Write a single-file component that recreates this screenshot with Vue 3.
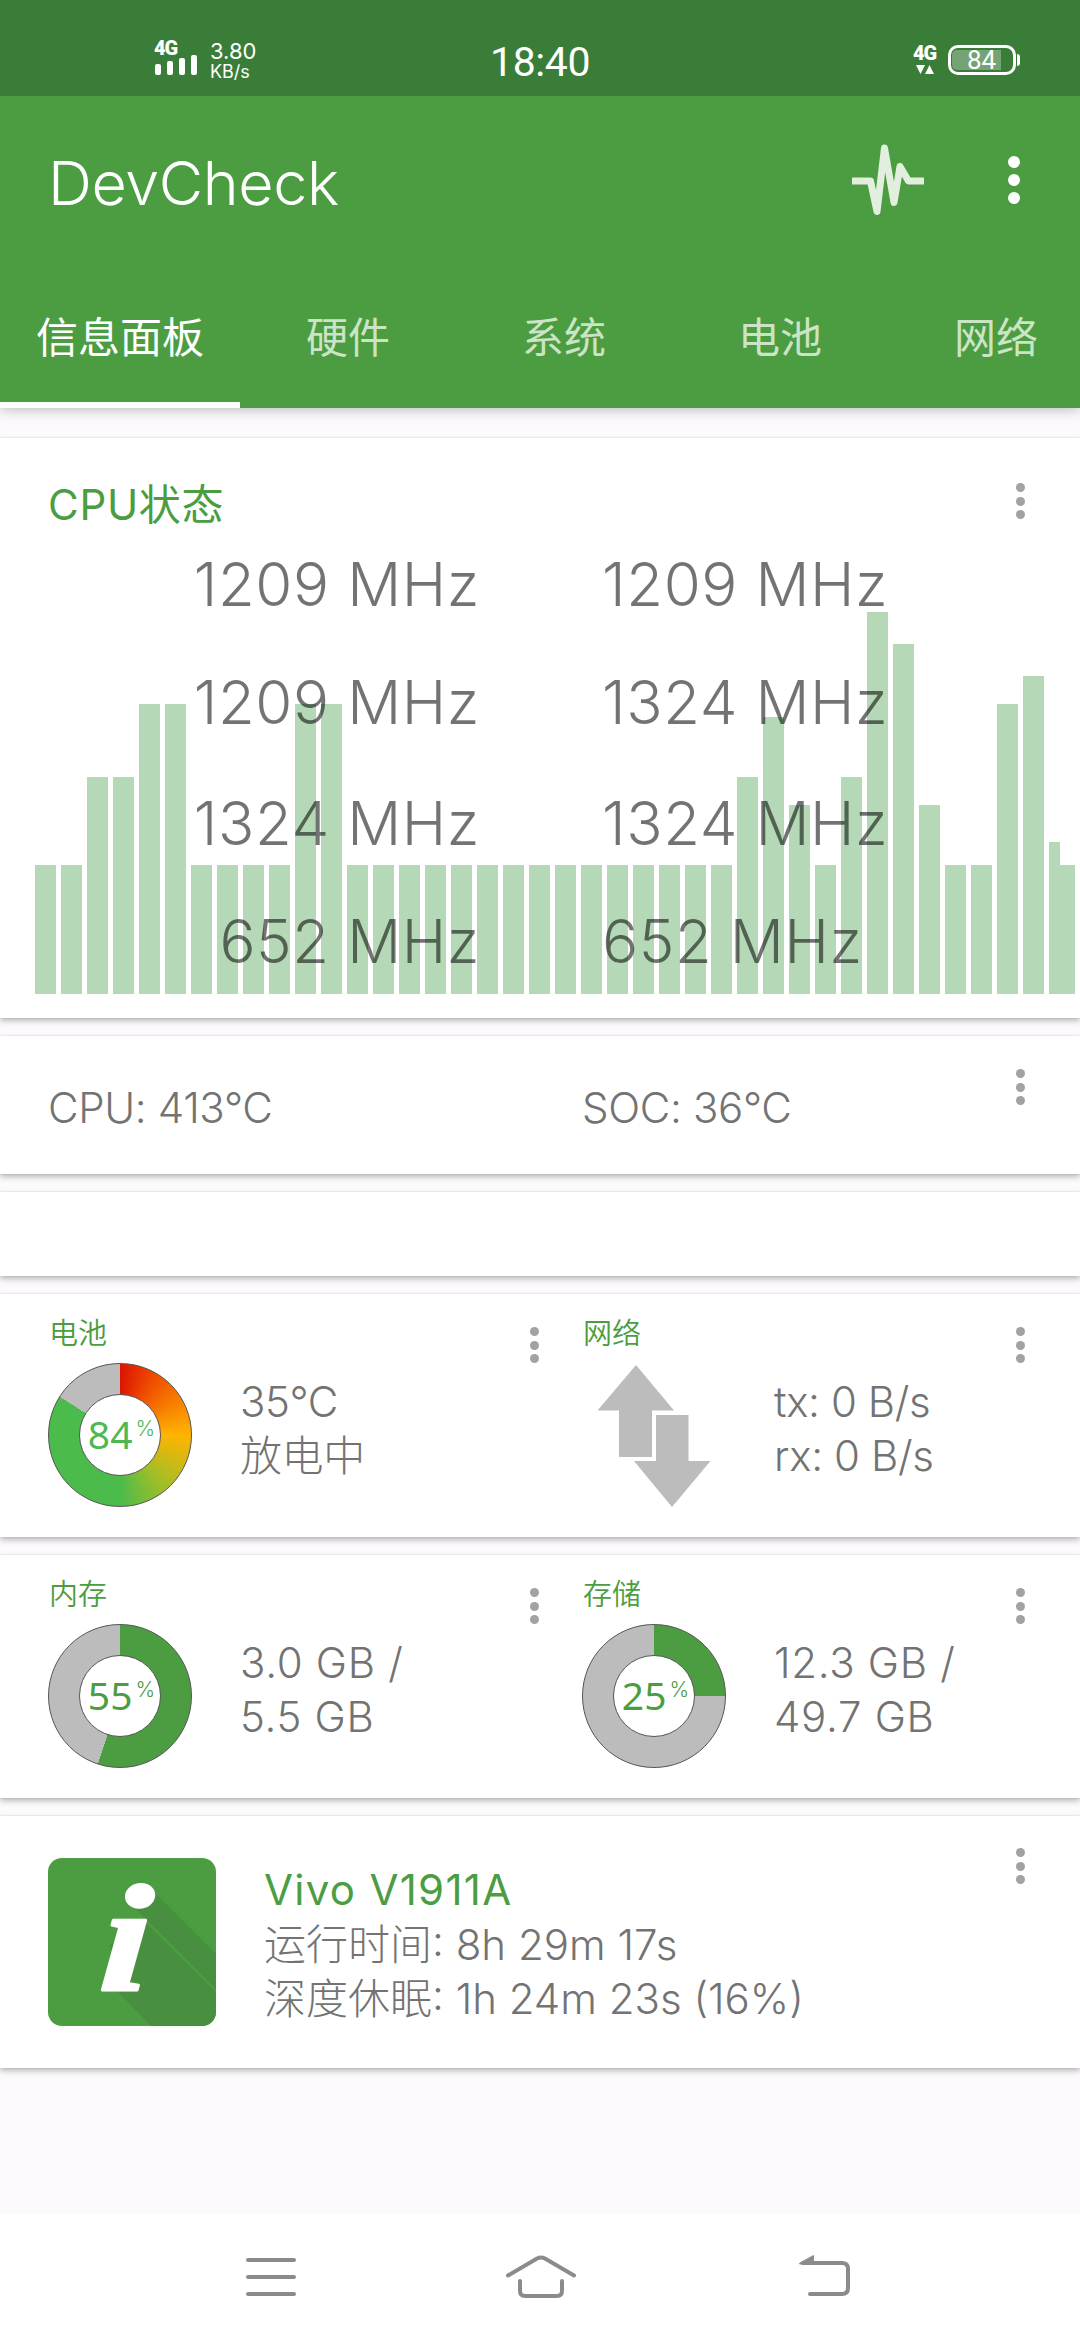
<script setup>
const tabs = ["信息面板", "硬件", "系统", "电池", "网络"];

const cores = [
  ["1209 MHz", "1209 MHz"],
  ["1209 MHz", "1324 MHz"],
  ["1324 MHz", "1324 MHz"],
  ["652 MHz", "652 MHz"],
];

const idle = 129;
const history = [
  idle, idle, 217, 217, 290, 290, idle, idle, idle, idle, 290, 290,
  ...Array(15).fill(idle),
  217, 277, 189, idle, 217, 382, 350, 189, idle, idle, 290, 318,
];

const signal = [11, 14, 17, 20];

function ring(percent, color) {
  return {
    background: `conic-gradient(${color} 0 ${percent}%, #bcbcbc ${percent}% 100%)`,
  };
}

const batteryRing = {
  background:
    "conic-gradient(#dc1402 0%, #f05000 9%, #ffb400 25%, #a0be28 39%, #4bbb4b 50%, #4bbb4b 84%, #bcbcbc 84%)",
};
</script>

<template>
  <div class="screen">
    <div class="status">
      <div class="net">
        <b>4G</b>
        <div class="signal">
          <i v-for="h in signal" :key="h" :style="{ height: h + 'px' }"></i>
        </div>
      </div>
      <div class="speed">
        <span>3.80</span>
        <small>KB/s</small>
      </div>
      <div class="clock">18:40</div>
      <div class="data">
        <b>4G</b>
        <svg width="18" height="9" viewBox="0 0 18 9" fill="#fff">
          <path d="M0 0h9L4.500 9zM9 9h9L13.500 0z" />
        </svg>
      </div>
      <div class="battery">
        <div class="level"></div>
        <span>84</span>
      </div>
      <div class="tip"></div>
    </div>

    <header>
      <div class="bar">
        <h1>DevCheck</h1>
        <svg class="pulse" width="72" height="72" viewBox="0 0 72 72">
          <path
            d="M0 37H18.500L25 67.500 32.500 4 42 58.500 48 22.500 56.500 37H72"
            fill="none"
            stroke="#e2efdf"
            stroke-width="7"
            stroke-linejoin="round"
          />
        </svg>
        <div class="dots big"><i></i><i></i><i></i></div>
      </div>
      <nav class="tabs">
        <a v-for="(tab, i) in tabs" :key="tab" :class="{ active: i === 0 }">{{ tab }}</a>
      </nav>
    </header>

    <main>
      <section class="card cpu">
        <div class="chart">
          <i v-for="(h, i) in history" :key="i" :style="{ height: h + 'px' }"></i>
          <i class="part"></i>
          <i class="rest"></i>
        </div>
        <div class="cpu-body">
          <div class="cpu-head">
            <h2>CPU状态</h2>
            <div class="dots"><i></i><i></i><i></i></div>
          </div>
          <div class="cores">
            <template v-for="(row, i) in cores" :key="i">
              <span class="left">{{ row[0] }}</span>
              <span>{{ row[1] }}</span>
            </template>
          </div>
        </div>
      </section>

      <section class="card temps">
        <span>CPU: 413°C</span>
        <span>SOC: 36°C</span>
        <div class="dots"><i></i><i></i><i></i></div>
      </section>

      <section class="card blank"></section>

      <section class="card pair">
        <div class="cell">
          <div class="info">
            <h3>电池</h3>
            <div class="row">
              <div class="ring" :style="batteryRing">
                <div class="hole light">84<sup>%</sup></div>
              </div>
              <p>35°C<br />放电中</p>
            </div>
          </div>
          <div class="dots"><i></i><i></i><i></i></div>
        </div>
        <div class="cell">
          <div class="info">
            <h3>网络</h3>
            <div class="row">
              <svg width="144" height="144" viewBox="0 0 144 144" fill="#bcbcbc">
                <path d="M54 2L92 47.500H70V94H37V47.500H15.500z" />
                <path d="M74 52H106.500V98H128.500L90 144 52 98H74z" />
              </svg>
              <p>tx: 0 B/s<br />rx: 0 B/s</p>
            </div>
          </div>
          <div class="dots"><i></i><i></i><i></i></div>
        </div>
      </section>

      <section class="card pair usage">
        <div class="cell">
          <div class="info">
            <h3>内存</h3>
            <div class="row">
              <div class="ring" :style="ring(55, '#4c9d42')">
                <div class="hole">55<sup>%</sup></div>
              </div>
              <p>3.0 GB /<br />5.5 GB</p>
            </div>
          </div>
          <div class="dots"><i></i><i></i><i></i></div>
        </div>
        <div class="cell">
          <div class="info">
            <h3>存储</h3>
            <div class="row">
              <div class="ring" :style="ring(25, '#4c9d42')">
                <div class="hole">25<sup>%</sup></div>
              </div>
              <p>12.3 GB /<br />49.7 GB</p>
            </div>
          </div>
          <div class="dots"><i></i><i></i><i></i></div>
        </div>
      </section>

      <section class="card device">
        <svg class="logo" width="168" height="168" viewBox="0 0 168 168">
          <clipPath id="tile"><rect width="168" height="168" rx="14" /></clipPath>
          <g clip-path="url(#tile)">
            <rect width="168" height="168" fill="#4c9d42" />
            <path d="M101 29L168 96V131L84 47z" fill="#488f3f" />
            <path d="M97 64L168 134V168H103L70 134 72 100 60 88z" fill="#488f3f" />
          </g>
          <text class="logo-i" transform="translate(50 132) skewX(-4) scale(1.120 .950)">i</text>
        </svg>
        <div class="about">
          <h2>Vivo V1911A</h2>
          <p>运行时间: 8h 29m 17s<br />深度休眠: 1h 24m 23s (16%)</p>
        </div>
        <div class="dots"><i></i><i></i><i></i></div>
      </section>
    </main>

    <footer>
      <svg width="52" height="44" viewBox="0 0 52 44">
        <path d="M3 5H49M3 22H49M3 39H49" />
      </svg>
      <svg class="home" width="72" height="44" viewBox="0 0 72 44">
        <path d="M3 20.500L32 3.500Q36 1.500 40 3.500L69 20.500M15 26V36Q15 41 20 41H52Q57 41 57 36V26" />
      </svg>
      <svg width="52" height="44" viewBox="0 0 52 44">
        <path d="M4 8H43Q49 8 49 14V33Q49 39 43 39H11" />
        <path class="head" d="M1 8L14.500 .500V9H1z" />
      </svg>
    </footer>
  </div>
</template>

<style>
body {
  margin: 0;
  background: #fcfafc;
}
</style>

<style scoped>
.screen {
  width: 1080px;
  height: 2340px;
  display: flex;
  flex-direction: column;
  overflow: hidden;
  background: #fcfafc;
  color: #737373;
  font-family: Inter, "Noto Sans CJK SC", sans-serif;
  font-weight: 300;
}

h1,
h2,
h3,
p {
  margin: 0;
}

i {
  display: block;
}

/* status bar */
.status {
  position: relative;
  z-index: 1;
  height: 96px;
  display: flex;
  align-items: flex-start;
  box-sizing: border-box;
  padding-left: 154px;
  background: #3a7d38;
  color: #fff;
}

.status b {
  display: block;
  font-family: Roboto, sans-serif;
  font-weight: 900;
  font-size: 20px;
  line-height: 20px;
  letter-spacing: -1px;
}

.net {
  width: 56px;
  padding-top: 38px;
}

.signal {
  display: flex;
  align-items: flex-end;
  gap: 6px;
  height: 20px;
  margin-top: -3px;
  padding-left: 1px;
}

.signal i {
  width: 6px;
  border-radius: 2px;
  background: #fff;
}

.speed {
  display: flex;
  flex-direction: column;
  width: 280px;
  padding-top: 40px;
  font-weight: 400;
  font-size: 22px;
  line-height: 22px;
}

.speed small {
  font-size: 18px;
  line-height: 20px;
}

.clock {
  width: 423px;
  padding-top: 38px;
  font-family: Roboto, sans-serif;
  font-weight: 400;
  font-size: 41px;
  line-height: 48px;
  letter-spacing: -0.400px;
}

.data {
  width: 35px;
  padding-top: 43px;
}

.data svg {
  display: block;
  margin: 2px 0 0 3px;
}

.battery {
  display: grid;
  box-sizing: border-box;
  width: 68px;
  height: 30px;
  margin-top: 45px;
  border: 3px solid #fff;
  border-radius: 10px;
  line-height: 25px;
}

.battery > * {
  grid-area: 1 / 1;
}

.battery .level {
  width: 49px;
  height: 20px;
  margin: 2px 0 0 1px;
  border-radius: 5px 0 0 5px;
  background: rgba(255, 255, 255, 0.3);
}

.battery span {
  padding-left: 16px;
  font-family: Roboto, sans-serif;
  font-weight: 400;
  font-size: 26px;
}

.tip {
  width: 3px;
  height: 12px;
  margin: 54px 0 0 1px;
  border-radius: 0 3px 3px 0;
  background: #fff;
}

/* app bar */
header {
  position: relative;
  height: 312px;
  background: #4c9d42;
  color: #fff;
  box-shadow: 0 2px 12px rgba(0, 0, 0, 0.25);
}

.bar {
  display: flex;
  align-items: center;
  height: 168px;
  padding-left: 48px;
}

h1 {
  flex: 1;
  padding-top: 6px;
  font-size: 61px;
  line-height: 80px;
  font-weight: 340;
  letter-spacing: -0.400px;
}

.pulse {
  margin-right: 84px;
}

.dots {
  display: flex;
  flex-direction: column;
  gap: 4.500px;
  margin-right: 55.500px;
}

.dots i {
  width: 9px;
  height: 9px;
  border-radius: 50%;
  background: #a2a2a2;
}

.dots.big {
  gap: 6px;
  margin-right: 60px;
}

.dots.big i {
  width: 12px;
  height: 12px;
  background: #fff;
}

.tabs {
  display: flex;
  height: 144px;
}

.tabs a {
  flex: none;
  box-sizing: border-box;
  width: 216px;
  height: 144px;
  padding-top: 2px;
  color: #cbe4c6;
  text-align: center;
  font-size: 42px;
  line-height: 144px;
  font-weight: 400;
  border-bottom: 6px solid transparent;
}

.tabs a.active {
  width: 240px;
  color: #fff;
  border-color: #fff;
}

/* cards */
main {
  flex: 1;
  display: flex;
  flex-direction: column;
  gap: 18px;
  padding-top: 30px;
}

.card {
  background: #fff;
  box-shadow: 0 3px 6px rgba(0, 0, 0, 0.26), 0 0 2px rgba(0, 0, 0, 0.12);
}

h2 {
  color: #4c9d42;
  font-weight: 400;
  font-size: 42px;
  letter-spacing: 0.700px;
}

.cpu {
  display: grid;
  height: 580px;
}

.cpu > * {
  grid-area: 1 / 1;
}

.chart {
  display: flex;
  align-items: flex-end;
  align-self: end;
  gap: 5px;
  padding: 0 0 24px 35px;
}

.chart i {
  flex: none;
  width: 21px;
  background: #b5d9b6;
}

.chart .part {
  width: 11px;
  height: 152px;
}

.chart .rest {
  width: 15px;
  height: 129px;
  margin-left: -5px;
}

.cpu-head {
  display: flex;
  justify-content: space-between;
  height: 87px;
  padding-left: 48px;
}

.cpu-head h2 {
  line-height: 60px;
  padding-top: 37px;
}

.cpu-head .dots {
  padding-top: 45px;
}

.cores {
  display: grid;
  grid-template-columns: 480px 474px;
  column-gap: 122px;
  grid-template-rows: 118px 121px 118px 118px;
  color: rgba(0, 0, 0, 0.55);
  font-size: 60px;
  line-height: 118px;
  letter-spacing: 0.600px;
}

.cores .left {
  text-align: right;
}

.temps {
  display: grid;
  grid-template-columns: 534px 1fr auto;
  height: 138px;
  padding-left: 48px;
  font-size: 42px;
  line-height: 143px;
  letter-spacing: -0.350px;
}

.temps .dots {
  padding-top: 33px;
}

.blank {
  height: 84px;
}

.pair {
  display: flex;
  height: 243px;
}

.cell {
  display: flex;
  flex: 1;
  justify-content: space-between;
  padding-left: 48px;
}

.cell:first-child {
  flex: none;
  width: 486px;
}

.cell:first-child .dots {
  margin-right: -4.500px;
}

.cell .dots {
  padding-top: 33px;
}

h3 {
  padding: 19px 0 0 1px;
  color: #4c9d42;
  font-size: 29px;
  line-height: 42px;
  font-weight: 350;
}

.row {
  display: flex;
  gap: 48px;
  margin-top: 8px;
}

.row p {
  padding-top: 12px;
  font-size: 42px;
  line-height: 54px;
  letter-spacing: -0.400px;
}

.usage p {
  letter-spacing: 0.700px;
}

.ring {
  display: grid;
  place-items: center;
  box-sizing: border-box;
  width: 144px;
  height: 144px;
  border: 1px solid #555;
  border-radius: 50%;
  background-origin: border-box !important;
}

.hole {
  display: flex;
  justify-content: center;
  box-sizing: border-box;
  width: 82px;
  height: 82px;
  padding-left: 3px;
  border: 1px solid #555;
  border-radius: 50%;
  background: #fff;
  color: #4c9d42;
  font-family: "Noto Sans", sans-serif;
  font-weight: 400;
  font-size: 39px;
  line-height: 78px;
}

.hole.light {
  color: #4fb853;
}

.hole sup {
  margin-left: 3px;
  font-family: Inter, sans-serif;
  font-weight: 300;
  font-size: 21px;
  line-height: 68px;
}

.device {
  display: flex;
  height: 252px;
  padding-left: 48px;
}

.logo {
  margin-top: 42px;
  overflow: visible;
}

.logo-i {
  fill: #fff;
  stroke: #fff;
  stroke-width: 3;
  stroke-linejoin: round;
  font: italic bold 160px "Liberation Serif", serif;
}

.about {
  flex: 1;
  padding: 47px 0 0 48px;
  font-size: 42px;
  line-height: 54px;
}

.about h2 {
  letter-spacing: 1.300px;
}

.about p {
  padding-top: 1px;
}

.device .dots {
  padding-top: 32px;
}

/* navigation bar */
footer {
  display: flex;
  justify-content: space-between;
  align-items: flex-start;
  box-sizing: border-box;
  height: 126px;
  padding: 41px 229px 0 245px;
  background: #fff;
}

footer .home {
  margin-right: 14px;
}

footer path {
  fill: none;
  stroke: #8b8b8b;
  stroke-width: 4;
  stroke-linecap: round;
}

footer .head {
  fill: #8b8b8b;
  stroke-width: 1;
}
</style>
